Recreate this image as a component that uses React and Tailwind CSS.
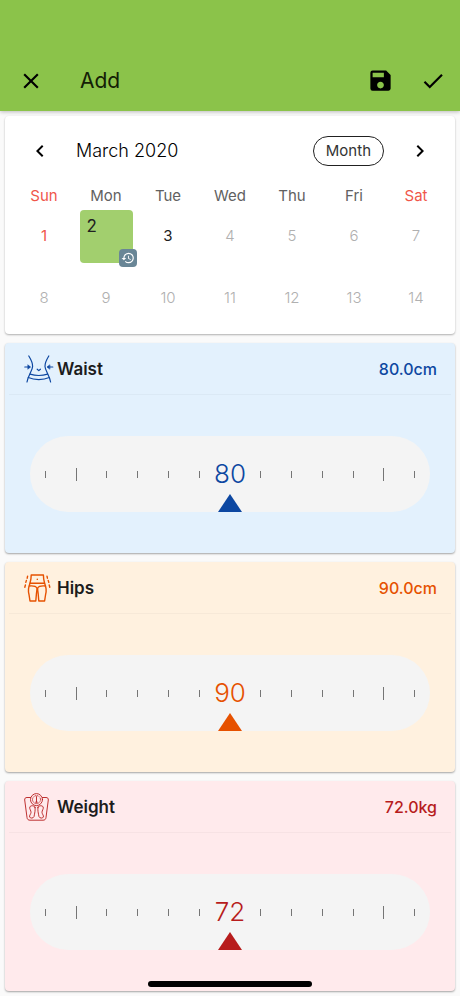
import { useState } from "react";
import { MdCheck, MdChevronLeft, MdChevronRight, MdClose, MdHistory, MdSave } from "react-icons/md";

const weekdays = ["Sun", "Mon", "Tue", "Wed", "Thu", "Fri", "Sat"];
const weeks = [
  [1, 2, 3, 4, 5, 6, 7],
  [8, 9, 10, 11, 12, 13, 14],
];
const today = 3;

const WaistIcon = () => (
  <svg width="30" height="28" viewBox="0 0 30 28" fill="none" stroke="currentColor" strokeWidth="1.2" strokeLinecap="round" strokeLinejoin="round" aria-hidden="true">
    <path d="M4.800 1C7.600 5.500 8.800 8.500 8.600 11.500C8.400 16 4 20.500 3 27" />
    <path d="M24.800 1C22 5.500 20.800 8.500 21 11.500C21.200 16 25.600 20.500 26.600 27" />
    <path d="M6 19.200C11.500 20.800 18.100 20.800 23.600 19.200" />
    <path d="M4.300 22.500C10.500 25.200 19.100 25.200 25.300 22.500" />
    <path d="M13.200 14.200L14.800 15.600L16.400 14.200" />
    <path d="M.8 12H5.400M24.200 12H28.800" />
    <path d="M4 10L6.600 12L4 14ZM25.600 10L23 12L25.600 14Z" fill="currentColor" strokeWidth=".6" />
  </svg>
);

const HipsIcon = () => (
  <svg width="28" height="28" viewBox="0 0 28 28" fill="none" stroke="currentColor" strokeWidth="1.400" strokeLinecap="round" strokeLinejoin="round" aria-hidden="true">
    <path d="M7.200 1H19.400C19.400 4 19.800 6.500 20.600 9.200H6C6.800 6.500 7.200 4 7.200 1Z" />
    <path d="M13.300 5.200V5.400" />
    <path d="M6 9.200C4.200 13.500 4 17 5 20.500L6 27H11.800L12.400 20C12.900 17.500 13.100 15.500 12.900 14C12 12.200 9.500 11.600 5.200 12" />
    <path d="M20.600 9.200C22.400 13.500 22.600 17 21.600 20.500L20.600 27H14.800L14.200 20C13.700 17.500 13.500 15.500 13.700 14C14.600 12.200 17.100 11.600 21.400 12" />
    <path d="M3.600 2.200L3.200 4.200M2.400 6.400L1.800 8.400M1.400 11L.8 13.200" />
    <path d="M23 2.200L23.400 4.200M24.200 6.400L24.800 8.400M25.200 11L25.800 13.200" />
  </svg>
);

const WeightIcon = () => (
  <svg width="26" height="28" viewBox="0 0 26 28" fill="none" stroke="currentColor" strokeWidth=".9" strokeLinecap="round" strokeLinejoin="round" aria-hidden="true">
    <circle cx="12.500" cy="6.600" r="6" />
    <circle cx="12.500" cy="6.600" r="4" strokeDasharray=".6 1.500" />
    <path d="M12.500 3.600V9M11.600 9.200H13.400" />
    <path d="M6.500 4.500H3C1.300 4.500.5 5.500.7 7L3 24.500C3.300 26.400 4.200 27.200 6 27.200H19C20.800 27.200 21.700 26.400 22 24.500L24.300 7C24.500 5.500 23.700 4.500 22 4.500H18.500" />
    <path d="M11 14.200C10.400 12.600 6.800 12 5.800 14C5.200 16 7.200 17.500 7 19.500C6.800 21.200 5.200 22.500 5.600 24C6.200 25.600 9.400 25.400 10 23.600C10.600 20.500 11.600 17 11 14.200Z" />
    <path d="M14 14.200C14.600 12.600 18.200 12 19.200 14C19.800 16 17.800 17.500 18 19.500C18.200 21.200 19.800 22.500 19.400 24C18.800 25.600 15.600 25.400 15 23.600C14.400 20.500 13.400 17 14 14.200Z" />
  </svg>
);

const measures = [
  { id: "waist", label: "Waist", unit: "cm", start: 80, icon: WaistIcon, card: "bg-[#e3f1fd]", color: "text-[#0d47a1]" },
  { id: "hips", label: "Hips", unit: "cm", start: 90, icon: HipsIcon, card: "bg-[#fff1df]", color: "text-[#e65100]" },
  { id: "weight", label: "Weight", unit: "kg", start: 72, icon: WeightIcon, card: "bg-[#ffeaec]", color: "text-[#b71c1c]" },
];

const dayColor = (day, column) => {
  if (day > today) return "text-[#b0b0b0]";
  return column === 0 ? "text-[#f0564a]" : "text-[#212121]";
};

const Calendar = ({ selected, setSelected }) => (
  <section className="rounded bg-white px-2 pb-[5px] shadow-[0_1px_2px_rgba(0,0,0,0.3)]">
    <div className="flex items-center gap-6 px-[15px] pt-5 pb-[21px]">
      <button aria-label="Previous month" className="text-black"><MdChevronLeft size={24} /></button>
      <h2 className="flex-1 text-lg leading-6 font-light text-black">March 2020</h2>
      <button className="h-[30px] rounded-full border border-[#212121] px-3 text-[15px] leading-5 text-[#333333]">Month</button>
      <button aria-label="Next month" className="text-black"><MdChevronRight size={24} /></button>
    </div>
    <table className="w-full table-fixed border-collapse text-center text-[15px] leading-[18px]">
      <thead>
        <tr>
          {weekdays.map((name, column) => (
            <th key={name} scope="col" className={`p-0 font-normal ${column === 0 || column === 6 ? "text-[#f0564a]" : "text-[#616161]"}`}>{name}</th>
          ))}
        </tr>
      </thead>
      <tbody>
        {weeks.map((week) => (
          <tr key={week[0]}>
            {week.map((day, column) => (
              <td key={day} className="h-[62px] p-0 align-middle">
                {day === selected ? (
                  <button className="relative mx-auto block size-[53px] rounded bg-[#a2cf6e] text-[#212121]">
                    <span className="absolute top-1.5 left-[7px] text-[17px] leading-5">{day}</span>
                    <span className="absolute -right-1 -bottom-1 flex size-[18px] items-center justify-center rounded bg-[#698696] text-white"><MdHistory size={14} /></span>
                  </button>
                ) : (
                  <button onClick={() => setSelected(day)} className={`size-[53px] ${day > today ? "font-light" : "font-normal"} ${dayColor(day, column)}`}>{day}</button>
                )}
              </td>
            ))}
          </tr>
        ))}
      </tbody>
    </table>
  </section>
);

const MeasureCard = ({ measure, value, setValue }) => {
  const Icon = measure.icon;
  return (
    <section className={`rounded pb-[41px] shadow-[0_1px_2px_rgba(0,0,0,0.35)] ${measure.card}`}>
      <div className="mx-1 flex h-[52px] items-center border-b border-black/3 pr-3.5 pl-[15px] leading-6">
        <span className={`w-[33px] ${measure.color}`}><Icon /></span>
        <label htmlFor={measure.id} className="flex-1 text-[17px] font-semibold text-[#1c1c1c]">{measure.label}</label>
        <output htmlFor={measure.id} className={`text-base font-medium ${measure.color}`}>{value.toFixed(1)}{measure.unit}</output>
      </div>
      <div className="relative mx-[25px] mt-[41px] h-[76px] rounded-full bg-[#f4f4f4]">
        <div className="grid h-full grid-cols-13 items-center justify-items-center">
          {Array.from({ length: 13 }, (_, index) => index - 6).map((step) => (
            step === 0
              ? <span key={step} className={`text-[26px] leading-8 font-light ${measure.color}`}>{value}</span>
              : <span key={step} className={`w-px bg-[#757575] ${Math.abs(step) === 5 ? "h-[13px]" : "h-[7px]"}`} />
          ))}
        </div>
        <svg width="24" height="18" viewBox="0 0 24 18" className={`absolute bottom-0 left-1/2 -translate-x-1/2 ${measure.color}`} aria-hidden="true">
          <path d="M12 0L24 18H0Z" fill="currentColor" />
        </svg>
        <input id={measure.id} type="range" min={measure.start - 40} max={measure.start + 40} value={value} onChange={(event) => setValue(Number(event.target.value))} className="absolute inset-0 h-full w-full cursor-pointer opacity-0" />
      </div>
    </section>
  );
};

export default function App() {
  const [selected, setSelected] = useState(2);
  const [values, setValues] = useState({ waist: 80, hips: 90, weight: 72 });

  return (
    <div className="min-h-screen bg-[#fafafa] font-['Inter',sans-serif]">
      <header className="flex items-center bg-[#8bc34a] pt-[50px] pr-3.5 pl-[18px] text-black shadow-[0_1px_4px_rgba(0,0,0,0.25)]">
        <button aria-label="Close"><MdClose size={26} /></button>
        <h1 className="ml-9 flex-1 py-4 text-[21px] leading-[29px] text-[#142005]">Add</h1>
        <div className="flex items-center gap-[26px]">
          <button aria-label="Save"><MdSave size={27} /></button>
          <button aria-label="Done"><MdCheck size={26} /></button>
        </div>
      </header>

      <main className="flex flex-col gap-[9px] px-[5px] pt-[5px] pb-1">
        <Calendar selected={selected} setSelected={setSelected} />
        {measures.map((measure) => (
          <MeasureCard
            key={measure.id}
            measure={measure}
            value={values[measure.id]}
            setValue={(next) => setValues((current) => ({ ...current, [measure.id]: next }))}
          />
        ))}
      </main>

      <div className="fixed bottom-[9px] left-1/2 h-1.5 w-41 -translate-x-1/2 rounded-full bg-black" />
    </div>
  );
}
